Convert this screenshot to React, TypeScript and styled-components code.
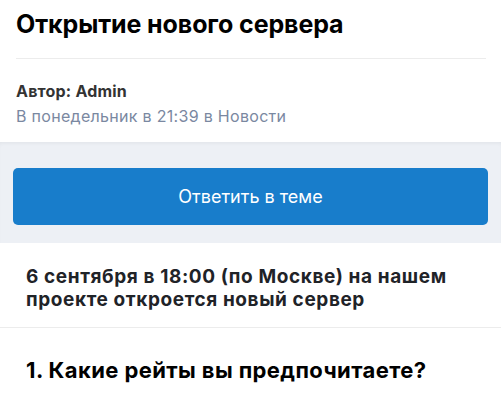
import styled, { createGlobalStyle } from 'styled-components'

const GlobalStyle = createGlobalStyle`
  html, body {
    margin: 0;
    padding: 0;
    background: #fff;
    font-family: Inter, "Noto Sans", "Liberation Sans", sans-serif;
    -webkit-font-smoothing: antialiased;
  }
`

const Page = styled.div`
  width: 501px;
  height: 400px;
  overflow: hidden;
  background: #fff;
`

const Header = styled.header`
  padding: 0 15px 0 16px;
`

const Title = styled.h1`
  margin: 0;
  padding: 8px 0 18px;
  font-size: 25px;
  line-height: 32px;
  font-weight: 700;
  color: #000;
  letter-spacing: -0.1px;
`

const Divider = styled.hr`
  margin: 0;
  border: none;
  height: 1px;
  background: #ececec;
`

const Meta = styled.div`
  padding: 22px 0 16px;
  display: flex;
  flex-direction: column;
  gap: 5px;
`

const Author = styled.div`
  font-size: 16px;
  line-height: 20px;
  font-weight: 700;
  color: #333;
  letter-spacing: 0.2px;
`

const Info = styled.div`
  font-size: 16px;
  line-height: 20px;
  color: #7a88a1;
  letter-spacing: 0.3px;
`

const ActionBand = styled.div`
  background: #edf0f5;
  padding: 26px 13px 18px;
  box-shadow: inset 0 3px 4px -2px rgba(0, 0, 0, 0.06);
`

const ReplyButton = styled.button`
  display: block;
  width: 100%;
  height: 57px;
  border: none;
  border-radius: 5px;
  background: #187dcb;
  color: #fff;
  font-family: inherit;
  font-size: 18px;
  font-weight: 400;
  cursor: pointer;
`

const Lead = styled.p`
  margin: 0;
  padding: 22px 26px 16px;
  font-size: 19px;
  line-height: 23px;
  font-weight: 700;
  color: #1f2328;
  letter-spacing: 0.6px;
`

const Question = styled.h2`
  margin: 0;
  padding: 28px 26px;
  font-size: 22px;
  line-height: 28px;
  font-weight: 700;
  color: #000;
  letter-spacing: 0.4px;
`

export default function App() {
  return (
    <Page>
      <GlobalStyle />
      <Header>
        <Title>Открытие нового сервера</Title>
        <Divider />
        <Meta>
          <Author>Автор: Admin</Author>
          <Info>В понедельник в 21:39 в Новости</Info>
        </Meta>
      </Header>
      <ActionBand>
        <ReplyButton>Ответить в теме</ReplyButton>
      </ActionBand>
      <Lead>6 сентября в 18:00 (по Москве) на нашем проекте откроется новый сервер</Lead>
      <Divider />
      <Question>1. Какие рейты вы предпочитаете?</Question>
    </Page>
  )
}
